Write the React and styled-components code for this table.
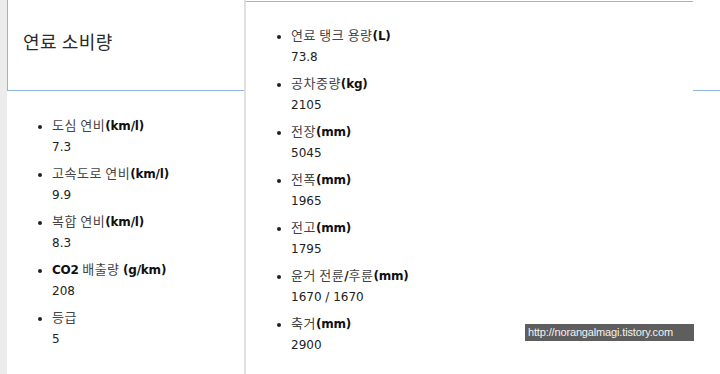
import styled, { createGlobalStyle } from "styled-components";

const GlobalStyle = createGlobalStyle`
  html, body {
    margin: 0;
    padding: 0;
    background: #ffffff;
  }
  body {
    font-family: "DejaVu Sans", "Noto Sans CJK KR", sans-serif;
    color: #222222;
  }
`;

const BLUE = "#93b5e0";

const Page = styled.div`
  position: relative;
  display: flex;
  min-height: 100vh;
  overflow: hidden;
`;

const Gutter = styled.div`
  width: 7px;
  flex: none;
  background: #ececec;
`;

const LeftColumn = styled.section`
  width: 237px;
  flex: none;
  display: flex;
  flex-direction: column;
`;

const TitleBox = styled.div`
  height: 91px;
  box-sizing: border-box;
  border-left: 1px solid ${BLUE};
  border-bottom: 1px solid ${BLUE};
  display: flex;
  align-items: center;
  padding: 0 0 9px 15px;
  h3 {
    margin: 0;
    font-family: "Noto Sans CJK KR", sans-serif;
    font-weight: 400;
    font-size: 18px;
    color: #2a2a2a;
    letter-spacing: 0.5px;
  }
`;

const Divider = styled.div`
  width: 2px;
  flex: none;
  background: #e0e0e0;
`;

const RightColumn = styled.section`
  flex: 1;
  display: flex;
  align-items: flex-start;
`;

const Panel = styled.div`
  width: 447px;
  flex: none;
  margin-top: 1px;
  border-top: 1px solid ${BLUE};
`;

const Tail = styled.div`
  flex: 1;
  height: 91px;
  box-sizing: border-box;
  border-bottom: 1px solid ${BLUE};
`;

const SpecList = styled.ul`
  margin: ${(p) => p.$top}px 0 0 0;
  padding: 0 0 0 45px;
  list-style: disc;
  font-size: 12px;
  li {
    margin-bottom: 4px;
  }
`;

const Label = styled.div`
  height: 21px;
  line-height: 21px;
  color: #444444;
  white-space: nowrap;
  span {
    font-family: "Noto Sans CJK KR", sans-serif;
    font-size: 13px;
    letter-spacing: 0.5px;
  }
  strong {
    font-family: "DejaVu Sans", sans-serif;
    font-weight: 700;
    font-size: 12px;
    color: #111111;
    letter-spacing: -0.2px;
  }
`;

const Value = styled.div`
  height: 21px;
  padding-top: 2px;
  line-height: 21px;
  color: #222222;
  font-family: "DejaVu Sans", sans-serif;
`;

const Watermark = styled.div`
  position: absolute;
  left: 525px;
  top: 324px;
  width: 169px;
  height: 17px;
  box-sizing: border-box;
  padding-left: 3px;
  background: #5e5e5e;
  color: #f2f2f2;
  font-family: "Liberation Sans", sans-serif;
  font-size: 11px;
  line-height: 17px;
  letter-spacing: -0.15px;
  white-space: nowrap;
`;

const fuel = [
  ["도심 연비(km/l)", "7.3"],
  ["고속도로 연비(km/l)", "9.9"],
  ["복합 연비(km/l)", "8.3"],
  ["CO2 배출량 (g/km)", "208"],
  ["등급", "5"],
];

const size = [
  ["연료 탱크 용량(L)", "73.8"],
  ["공차중량(kg)", "2105"],
  ["전장(mm)", "5045"],
  ["전폭(mm)", "1965"],
  ["전고(mm)", "1795"],
  ["윤거 전륜/후륜(mm)", "1670 / 1670"],
  ["축거(mm)", "2900"],
];

// latin parts of a label are bold, hangul stays regular
function renderLabel(text) {
  return text.split(/([^\uAC00-\uD7A3\s]+)/).map((part, i) =>
    i % 2 === 1 ? <strong key={i}>{part}</strong> : <span key={i}>{part}</span>
  );
}

function Specs({ items, top }) {
  return (
    <SpecList $top={top}>
      {items.map(([label, value]) => (
        <li key={label}>
          <Label>{renderLabel(label)}</Label>
          <Value>{value}</Value>
        </li>
      ))}
    </SpecList>
  );
}

function App() {
  return (
    <>
      <GlobalStyle />
      <Page>
        <Gutter />
        <LeftColumn>
          <TitleBox>
            <h3>연료 소비량</h3>
          </TitleBox>
          <Specs items={fuel} top={23} />
        </LeftColumn>
        <Divider />
        <RightColumn>
          <Panel>
            <Specs items={size} top={22} />
          </Panel>
          <Tail />
        </RightColumn>
        <Watermark>http://norangalmagi.tistory.com</Watermark>
      </Page>
    </>
  );
}

export default App;
